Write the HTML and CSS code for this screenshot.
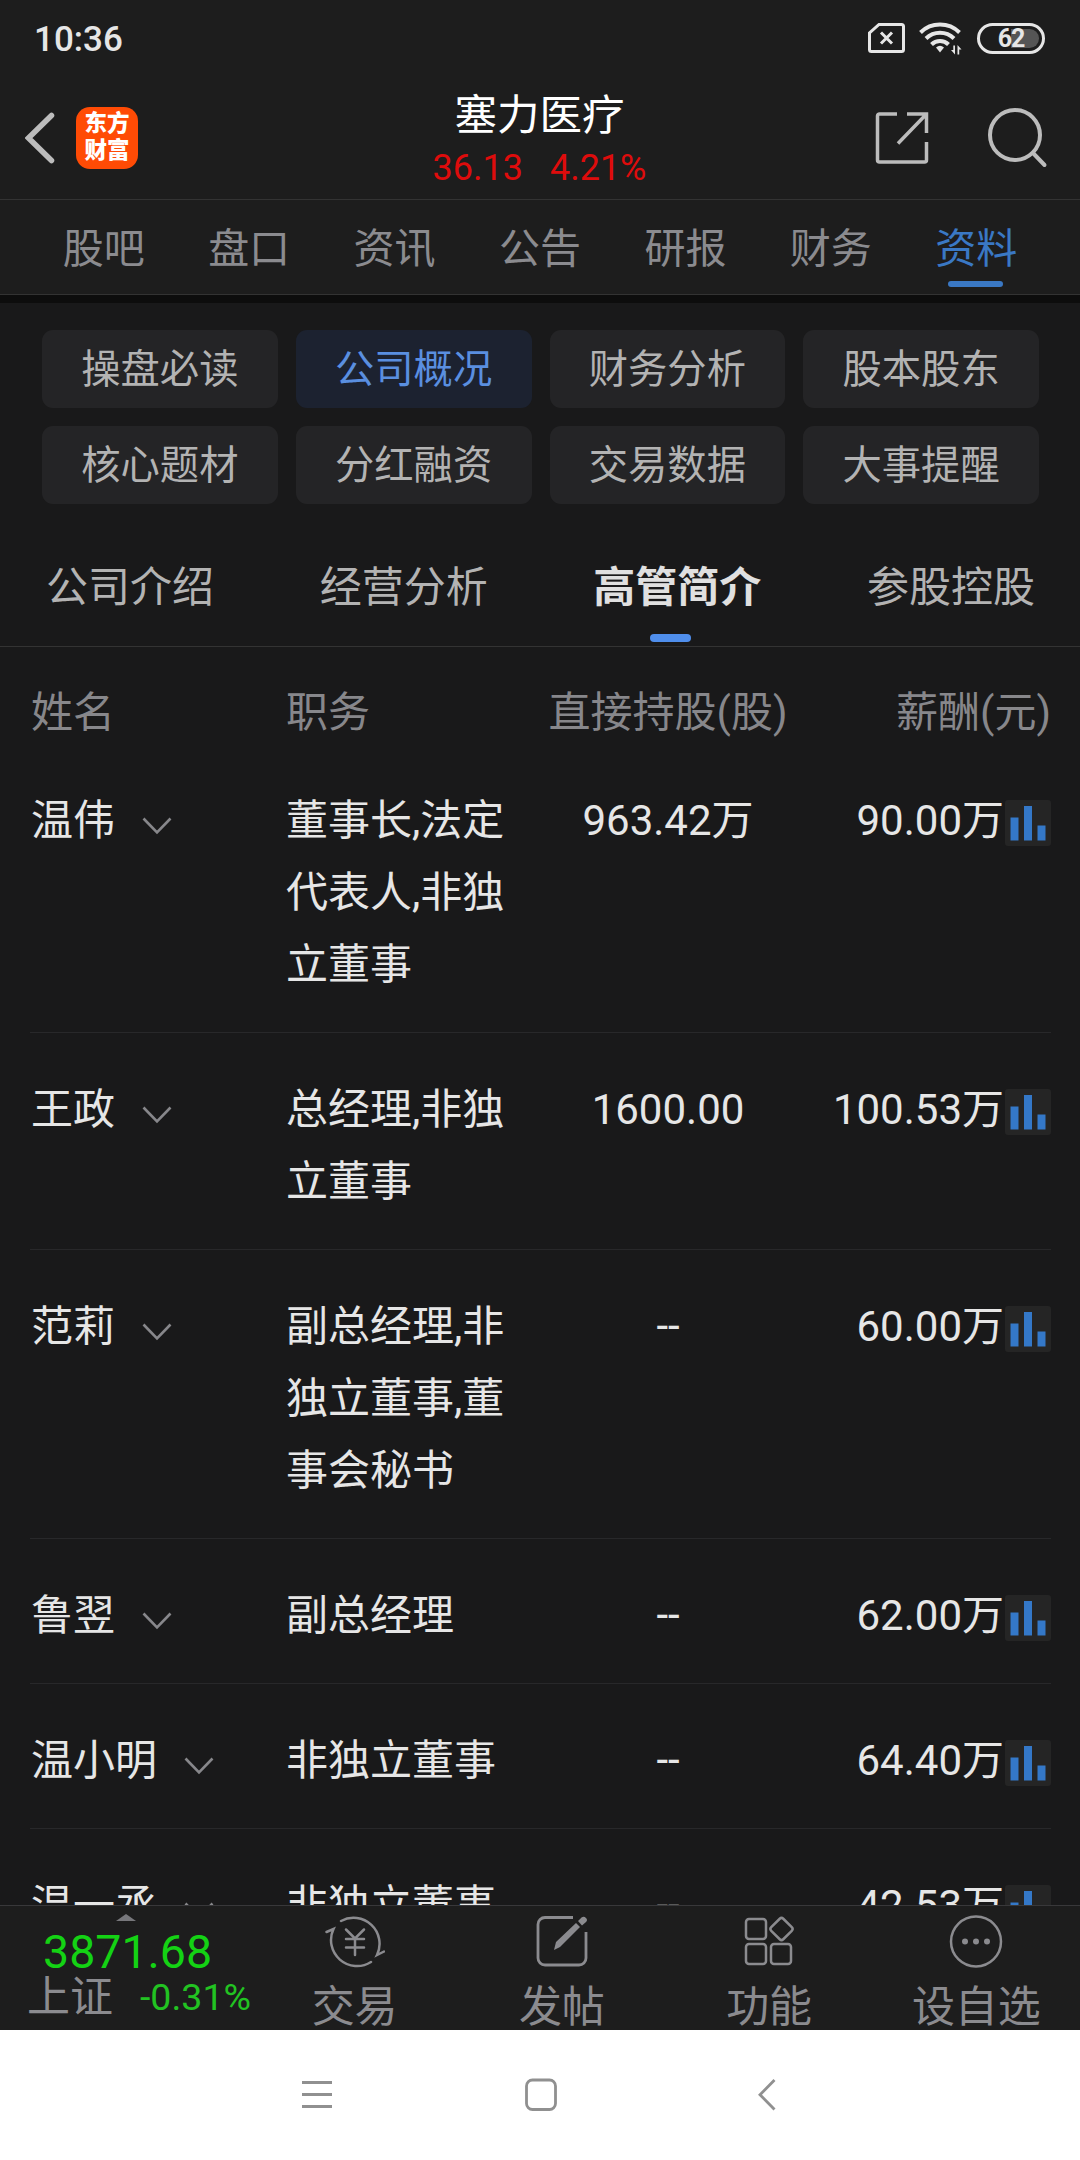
FILE: index.html
```
<!DOCTYPE html>
<html lang="zh-CN">
<head>
    <meta charset="UTF-8">
    <meta name="viewport" content="width=device-width, initial-scale=1.0">
    <title>塞力医疗 - 高管简介</title>
    <link rel="stylesheet" href="styles.css">
</head>
<body>
    <svg class="defs" width="0" height="0">
        <symbol id="down" viewBox="0 0 30 18">
            <path d="M1.5 1.5 15 15.5 28.5 1.5" fill="none" stroke="#87878b" stroke-width="2.6"/>
        </symbol>
        <symbol id="chart" viewBox="0 0 46 46">
            <rect width="46" height="46" rx="3" fill="#252525"/>
            <path d="M5.5 17.5h8v23h-8zM19 6h8v34.5h-8zM32.5 25.5h8v15h-8z" fill="#3478c8"/>
        </symbol>
    </svg>

    <div class="status">
        <span class="time">10:36</span>
        <div class="signals">
            <svg width="37" height="30" viewBox="0 0 37 30">
                <path d="M11 1.5H33.5a2 2 0 0 1 2 2V26.5a2 2 0 0 1-2 2H3.5a2 2 0 0 1-2-2V10z" fill="none" stroke="#e6e6e6" stroke-width="3"/>
                <path d="M13 9.5 24 20.5M24 9.5 13 20.5" stroke="#e6e6e6" stroke-width="3"/>
            </svg>
            <svg width="44" height="34" viewBox="0 0 44 34">
                <g fill="none" stroke="#e6e6e6" stroke-width="4">
                    <path d="M1.5 11.5A28 28 0 0 1 40.5 11.5"/>
                    <path d="M7 17.5A20 20 0 0 1 35 17.5"/>
                    <path d="M12.5 23.5A12 12 0 0 1 29.5 23.5"/>
                </g>
                <path d="M17 26.5Q21 23 25 26.5L21 31.5z" fill="#e6e6e6"/>
                <path d="M36 24.5v9l-4-4.5h2.3v-4.5zM38.5 33.5v-9.5l4 4.5h-2.3v5z" fill="#e6e6e6"/>
            </svg>
            <span class="battery">62</span>
        </div>
    </div>

    <header class="header">
        <div class="left">
            <svg width="30" height="52" viewBox="0 0 30 52">
                <path d="M26.5 3.5 3.5 26 26.5 48.5" fill="none" stroke="#bcbcbc" stroke-width="5.5" stroke-linecap="round"/>
            </svg>
            <div class="logo">东方<br>财富</div>
        </div>
        <div class="stock">
            <h1>塞力医疗</h1>
            <p><span>36.13</span><span>4.21%</span></p>
        </div>
        <div class="right">
            <svg width="54" height="54" viewBox="0 0 54 54">
                <g fill="none" stroke="#bcbcbc" stroke-width="3.5">
                    <path d="M22 3H4.5a2 2 0 0 0-2 2V49a2 2 0 0 0 2 2H49.5a2 2 0 0 0 2-2V31"/>
                    <path d="M32 3H51.5V22M51 3.5 23 32.5"/>
                </g>
            </svg>
            <svg width="60" height="60" viewBox="0 0 60 60">
                <g fill="none" stroke="#bcbcbc" stroke-width="4" stroke-linecap="round">
                    <circle cx="27" cy="27" r="25"/>
                    <path d="M45 45 56.5 57"/>
                </g>
            </svg>
        </div>
    </header>

    <nav class="tabs">
        <a>股吧</a>
        <a>盘口</a>
        <a>资讯</a>
        <a>公告</a>
        <a>研报</a>
        <a>财务</a>
        <a class="active">资料</a>
    </nav>

    <main class="main">
        <div class="chips">
            <a>操盘必读</a>
            <a class="active">公司概况</a>
            <a>财务分析</a>
            <a>股本股东</a>
            <a>核心题材</a>
            <a>分红融资</a>
            <a>交易数据</a>
            <a>大事提醒</a>
        </div>

        <nav class="subtabs">
            <a>公司介绍</a>
            <a>经营分析</a>
            <a class="active">高管简介</a>
            <a>参股控股</a>
        </nav>

        <div class="table">
            <div class="row thead">
                <div>姓名</div>
                <div>职务</div>
                <div class="hold">直接持股(股)</div>
                <div class="pay">薪酬(元)</div>
            </div>
            <div class="row">
                <div class="name">温伟<svg><use href="#down"/></svg></div>
                <div>董事长,法定代表人,非独立董事</div>
                <div class="hold">963.42万</div>
                <div class="pay">90.00万<svg><use href="#chart"/></svg></div>
            </div>
            <div class="row">
                <div class="name">王政<svg><use href="#down"/></svg></div>
                <div>总经理,非独立董事</div>
                <div class="hold">1600.00</div>
                <div class="pay">100.53万<svg><use href="#chart"/></svg></div>
            </div>
            <div class="row">
                <div class="name">范莉<svg><use href="#down"/></svg></div>
                <div>副总经理,非独立董事,董事会秘书</div>
                <div class="hold none">--</div>
                <div class="pay">60.00万<svg><use href="#chart"/></svg></div>
            </div>
            <div class="row">
                <div class="name">鲁翌<svg><use href="#down"/></svg></div>
                <div>副总经理</div>
                <div class="hold none">--</div>
                <div class="pay">62.00万<svg><use href="#chart"/></svg></div>
            </div>
            <div class="row">
                <div class="name">温小明<svg><use href="#down"/></svg></div>
                <div>非独立董事</div>
                <div class="hold none">--</div>
                <div class="pay">64.40万<svg><use href="#chart"/></svg></div>
            </div>
            <div class="row">
                <div class="name">温一丞<svg><use href="#down"/></svg></div>
                <div>非独立董事</div>
                <div class="hold none">--</div>
                <div class="pay">42.53万<svg><use href="#chart"/></svg></div>
            </div>
        </div>
    </main>

    <footer class="bottom">
        <div class="index">
            <i class="arrow"></i>
            <b>3871.68</b>
            <p>上证<span>-0.31%</span></p>
        </div>
        <a>
            <svg width="60" height="56" viewBox="0 0 60 56">
                <g fill="none" stroke="#8b8b8f" stroke-width="2.5" stroke-linecap="round">
                    <path d="M16 7A26 26 0 0 1 52 41L59 37.5"/>
                    <path d="M46 48A26 26 0 0 1 8.5 15L1.5 18"/>
                    <path d="M21 15.5 30 24.5 39 15.5M30 24.5V41M21 25H39M21 33.5H39"/>
                </g>
            </svg>
            交易
        </a>
        <a>
            <svg width="52" height="56" viewBox="0 0 52 56">
                <path d="M37 3.5H9a7 7 0 0 0-7 7V44a7 7 0 0 0 7 7H43a7 7 0 0 0 7-7V18" fill="none" stroke="#8b8b8f" stroke-width="2.8"/>
                <path d="M18 36 20 28 40 9 44 13 24 33zM42 7 45.5 3.5Q48 2 50 4T50 8L46 11.5z" fill="#8b8b8f"/>
            </svg>
            发帖
        </a>
        <a>
            <svg width="50" height="56" viewBox="0 0 50 56">
                <g fill="none" stroke="#8b8b8f" stroke-width="2.5">
                    <rect x="2" y="5" width="20" height="20" rx="3"/>
                    <rect x="2" y="30" width="20" height="20" rx="3"/>
                    <rect x="27" y="30" width="20" height="20" rx="3"/>
                    <rect x="29" y="6.5" width="17" height="17" rx="2.5" transform="rotate(45 37.5 15)"/>
                </g>
            </svg>
            功能
        </a>
        <a>
            <svg width="54" height="56" viewBox="0 0 54 56">
                <circle cx="27" cy="27.5" r="25" fill="none" stroke="#8b8b8f" stroke-width="2.5"/>
                <g fill="#8b8b8f">
                    <circle cx="16" cy="27.5" r="3"/>
                    <circle cx="27" cy="27.5" r="3"/>
                    <circle cx="38" cy="27.5" r="3"/>
                </g>
            </svg>
            设自选
        </a>
    </footer>

    <div class="sysnav">
        <svg width="30" height="34" viewBox="0 0 30 34">
            <path d="M0 4.5H30M0 16.5H30M0 28.5H30" stroke="#909090" stroke-width="2.8"/>
        </svg>
        <svg width="34" height="34" viewBox="0 0 34 34">
            <rect x="2.5" y="2" width="29" height="29.5" rx="6" fill="none" stroke="#909090" stroke-width="2.8"/>
        </svg>
        <svg width="36" height="34" viewBox="0 0 36 34">
            <path d="M25.5 2 11 16.7 25.5 31.5" fill="none" stroke="#909090" stroke-width="2.8"/>
        </svg>
    </div>
</body>
</html>
```

FILE: styles.css
```
*{
    padding: 0;
    margin: 0;
    box-sizing: border-box;
}
body{
    height: 2160px;
    width: 1080px;
    overflow: hidden;
    background: #19191a;
    color: #e6e6e6;
    font-family: Roboto, "Noto Sans CJK SC", sans-serif;
    font-size: 42px;
    font-weight: 400;
    display: flex;
    flex-direction: column;
}
svg{
    display: block;
    flex: none;
}
.defs{
    position: absolute;
}

/* status bar */
.status{
    height: 76px;
    padding: 0 35px 0 34px;
    background: #1d1d1d;
    display: flex;
    justify-content: space-between;
    align-items: center;
    flex: none;
}
.time{
    padding-top: 2px;
    font-size: 35px;
    font-weight: 500;
}
.signals{
    display: flex;
    align-items: center;
    gap: 14px;
}
.battery{
    width: 68px;
    height: 31px;
    border: 3px solid #e6e6e6;
    border-radius: 16px;
    background: linear-gradient(90deg, #1d1d1d 50%, #555 50%) content-box;
    padding: 3px;
    font-size: 25px;
    font-weight: 700;
    line-height: 19px;
    letter-spacing: -1px;
    text-align: center;
}

/* title */
.header{
    height: 124px;
    padding: 0 32px 0 25px;
    background: #1d1d1d;
    border-bottom: 1px solid #333;
    display: grid;
    grid-template-columns: 1fr auto 1fr;
    align-items: center;
    flex: none;
}
.left, .right{
    display: flex;
    align-items: center;
}
.left{
    gap: 21px;
}
.right{
    justify-content: flex-end;
    gap: 59px;
}
.logo{
    width: 62px;
    height: 62px;
    border-radius: 14px;
    background: #ff4b05;
    color: #fff;
    font-size: 22.5px;
    font-weight: 900;
    line-height: 27px;
    padding-top: 3px;
    text-align: center;
}
.stock{
    padding: 7px 0 0 6px;
    text-align: center;
}
.stock h1{
    color: #fff;
    font-size: 42.5px;
    font-weight: 400;
    line-height: 54px;
}
.stock p{
    color: #de0c0c;
    font-size: 36px;
    line-height: 51px;
    display: flex;
    justify-content: center;
    gap: 27px;
}

/* main tabs */
.tabs{
    height: 103px;
    padding: 0 31px;
    background: #1d1d1d;
    border-bottom: 8px solid #0d0d0d;
    box-shadow: inset 0 -1px #333;
    display: flex;
    flex: none;
}
.tabs a{
    flex: 1;
    color: #8b8b8f;
    font-size: 41px;
    line-height: 99px;
    text-align: center;
}
.tabs .active{
    color: #3a78c4;
    position: relative;
}
.tabs .active::after{
    content: "";
    position: absolute;
    left: 50%;
    bottom: 8px;
    width: 55px;
    height: 6px;
    margin-left: -28px;
    border-radius: 3px;
    background: #3a78c4;
}

.main{
    flex: 1;
    min-height: 0;
    overflow: hidden;
}
.chips{
    padding: 27px 41px 0 42px;
    display: grid;
    grid-template-columns: repeat(4, 1fr);
    gap: 18px;
}
.chips a{
    height: 78px;
    border-radius: 11px;
    background: #242426;
    color: #b3b3b3;
    font-size: 39.3px;
    line-height: 80px;
    text-align: center;
}
.chips .active{
    background: #1c2230;
    color: #5a8fe0;
}

.subtabs{
    height: 143px;
    padding: 0 45px 0 46px;
    border-bottom: 1px solid #333;
    display: flex;
    justify-content: space-between;
}
.subtabs a{
    color: #b3b3b3;
    font-size: 42px;
    line-height: 167px;
}
.subtabs .active{
    color: #e0e0e0;
    font-weight: 700;
    position: relative;
}
.subtabs .active::after{
    content: "";
    position: absolute;
    left: 50%;
    top: 130px;
    width: 41px;
    height: 8px;
    margin-left: -27px;
    border-radius: 4px;
    background: #4f8eec;
}

/* executives table */
.table{
    padding: 0 29px 0 30px;
}
.row{
    padding: 41px 0 31px 1px;
    border-bottom: 1px solid #28282a;
    line-height: 72px;
    display: grid;
    grid-template-columns: 255px 222px 300px 1fr;
}
.row.thead{
    height: 97px;
    padding-top: 30px;
    border: none;
    color: #87878b;
}
.name{
    display: flex;
    gap: 27px;
}
.name svg{
    width: 30px;
    height: 18px;
    margin-top: 32px;
}
.hold{
    padding-left: 20px;
    text-align: center;
    white-space: nowrap;
}
.none{
    line-height: 69px;
}
.pay{
    display: flex;
    justify-content: flex-end;
    gap: 1px;
    white-space: nowrap;
}
.pay svg{
    width: 46px;
    height: 46px;
    margin-top: 15px;
}

/* bottom bar */
.bottom{
    height: 125px;
    background: #1d1d1d;
    border-top: 1px solid #38383a;
    display: flex;
    flex: none;
}
.bottom a{
    flex: 1;
    padding-top: 8px;
    color: #8b8b8f;
    font-size: 43px;
    line-height: 74px;
    display: flex;
    flex-direction: column;
    align-items: center;
}
.index{
    width: 251px;
    padding-top: 8px;
}
.arrow{
    display: block;
    width: 0;
    margin-left: 116px;
    border: 10px solid transparent;
    border-top: none;
    border-bottom: 7px solid #77777b;
}
.index b{
    display: block;
    padding-left: 43px;
    color: #14d214;
    font-size: 46.5px;
    font-weight: 400;
    line-height: 63px;
}
.index p{
    padding-left: 27px;
    color: #8b8b8f;
    font-size: 43px;
    line-height: 27px;
    display: flex;
    gap: 27px;
}
.index span{
    color: #22c322;
    font-size: 37.5px;
}

/* android navigation */
.sysnav{
    height: 130px;
    padding: 0 295px 0 302px;
    background: #fff;
    display: flex;
    justify-content: space-between;
    align-items: center;
    flex: none;
}
```
